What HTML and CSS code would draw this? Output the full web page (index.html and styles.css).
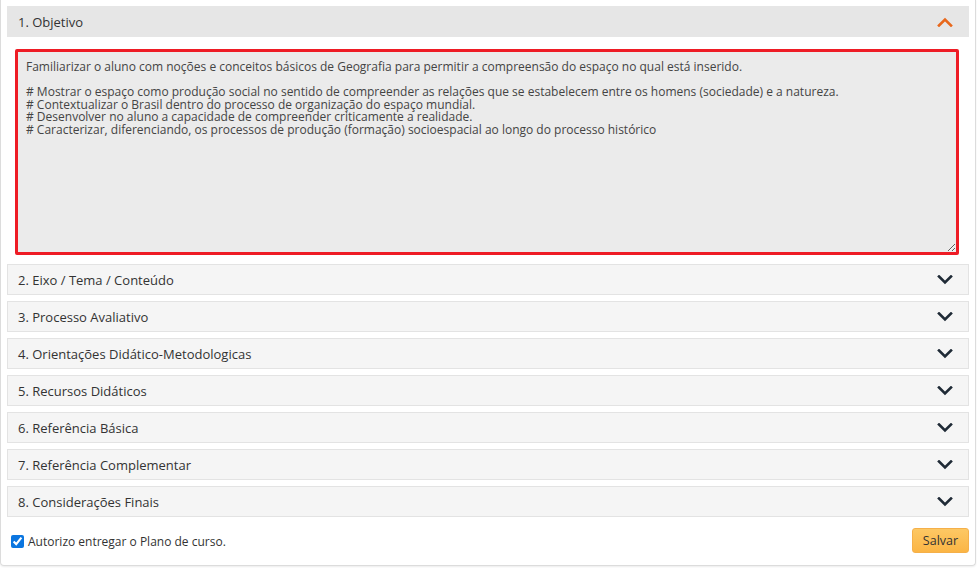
FILE: index.html
```html
<!DOCTYPE html>
<html lang="pt">
<head>
<meta charset="utf-8">
<title>Plano de curso</title>
<link rel="stylesheet" href="styles.css">
</head>
<body>
<div class="card">
  <div class="panel open">
    <div class="panel-head">
      <span class="title">1. Objetivo</span>
      <svg class="chev up" viewBox="0 0 16 10" width="16" height="10"><path d="M2 8.5 L8 2.5 L14 8.5" fill="none" stroke="currentColor" stroke-width="2.6" stroke-linecap="square"/></svg>
    </div>
    <div class="panel-body">
      <textarea class="objective">Familiarizar o aluno com noções e conceitos básicos de Geografia para permitir a compreensão do espaço no qual está inserido.

# Mostrar o espaço como produção social no sentido de compreender as relações que se estabelecem entre os homens (sociedade) e a natureza.
# Contextualizar o Brasil dentro do processo de organização do espaço mundial.
# Desenvolver no aluno a capacidade de compreender criticamente a realidade.
# Caracterizar, diferenciando, os processos de produção (formação) socioespacial ao longo do processo histórico</textarea>
    </div>
  </div>

  <div class="panel"><div class="panel-head"><span class="title">2. Eixo / Tema / Conteúdo</span><svg class="chev" viewBox="0 0 16 10" width="16" height="10"><path d="M2 1.5 L8 7.5 L14 1.5" fill="none" stroke="currentColor" stroke-width="2.6" stroke-linecap="square"/></svg></div></div>
  <div class="panel"><div class="panel-head"><span class="title">3. Processo Avaliativo</span><svg class="chev" viewBox="0 0 16 10" width="16" height="10"><path d="M2 1.5 L8 7.5 L14 1.5" fill="none" stroke="currentColor" stroke-width="2.6" stroke-linecap="square"/></svg></div></div>
  <div class="panel"><div class="panel-head"><span class="title">4. Orientações Didático-Metodologicas</span><svg class="chev" viewBox="0 0 16 10" width="16" height="10"><path d="M2 1.5 L8 7.5 L14 1.5" fill="none" stroke="currentColor" stroke-width="2.6" stroke-linecap="square"/></svg></div></div>
  <div class="panel"><div class="panel-head"><span class="title">5. Recursos Didáticos</span><svg class="chev" viewBox="0 0 16 10" width="16" height="10"><path d="M2 1.5 L8 7.5 L14 1.5" fill="none" stroke="currentColor" stroke-width="2.6" stroke-linecap="square"/></svg></div></div>
  <div class="panel"><div class="panel-head"><span class="title">6. Referência Básica</span><svg class="chev" viewBox="0 0 16 10" width="16" height="10"><path d="M2 1.5 L8 7.5 L14 1.5" fill="none" stroke="currentColor" stroke-width="2.6" stroke-linecap="square"/></svg></div></div>
  <div class="panel"><div class="panel-head"><span class="title">7. Referência Complementar</span><svg class="chev" viewBox="0 0 16 10" width="16" height="10"><path d="M2 1.5 L8 7.5 L14 1.5" fill="none" stroke="currentColor" stroke-width="2.6" stroke-linecap="square"/></svg></div></div>
  <div class="panel"><div class="panel-head"><span class="title">8. Considerações Finais</span><svg class="chev" viewBox="0 0 16 10" width="16" height="10"><path d="M2 1.5 L8 7.5 L14 1.5" fill="none" stroke="currentColor" stroke-width="2.6" stroke-linecap="square"/></svg></div></div>

  <div class="footer">
    <label class="check"><input type="checkbox" checked> Autorizo entregar o Plano de curso.</label>
    <button class="btn-save" type="button">Salvar</button>
  </div>
</div>
</body>
</html>
```

FILE: styles.css
```css
html, body {
  margin: 0;
  padding: 0;
  background: #fff;
}
body {
  font-family: "Open Sans", "Noto Sans", sans-serif;
  color: #333;
  width: 977px;
  height: 568px;
  overflow: hidden;
}
.card {
  box-sizing: border-box;
  width: 976px;
  height: 567px;
  margin-top: -1px;
  border: 1px solid #dcdcdc;
  border-top: none;
  border-radius: 0 0 4px 4px;
  box-shadow: 0 1px 2px rgba(0,0,0,0.08);
  padding: 7px 6px 0 6px;
  display: flex;
  flex-direction: column;
  gap: 6px;
}
.panel {
  width: 962px;
}
.panel-head {
  display: flex;
  align-items: center;
  justify-content: space-between;
  box-sizing: border-box;
  height: 31px;
  padding: 0 15px 0 10px;
  background: #f5f5f5;
  border: 1px solid #e3e3e3;
  font-size: 13px;
  color: #333;
}
.open .panel-head {
  background: #e6e6e6;
  border-color: #e6e6e6;
}
.chev {
  color: #1f2a36;
}
.chev.up {
  color: #e8681c;
}
.panel-body {
  padding: 12px 10px 3px 8px;
}
.objective {
  display: block;
  box-sizing: border-box;
  width: 944px;
  height: 206px;
  margin: 0;
  border: 3px solid #ee1c25;
  border-radius: 2px;
  background: #ebebeb;
  padding: 9px 8px 6px 8px;
  font-family: "Open Sans", "Noto Sans", sans-serif;
  font-size: 12px;
  line-height: 12.6px;
  color: #444;
  resize: vertical;
}
.footer {
  display: flex;
  align-items: center;
  justify-content: space-between;
  padding: 5px 0 0 4px;
}
.check {
  display: flex;
  align-items: center;
  gap: 4px;
  font-size: 12px;
  color: #333;
  margin-top: 1px;
}
.check input {
  margin: 0;
  width: 13px;
  height: 13px;
  accent-color: #0b76e0;
}
.btn-save {
  font-family: "Open Sans", "Noto Sans", sans-serif;
  font-size: 12.5px;
  color: #333;
  height: 25px;
  width: 57px;
  padding: 0;
  border: 1px solid #f5b04a;
  border-radius: 3px;
  background: linear-gradient(#fdc864, #fbb545);
}
```
